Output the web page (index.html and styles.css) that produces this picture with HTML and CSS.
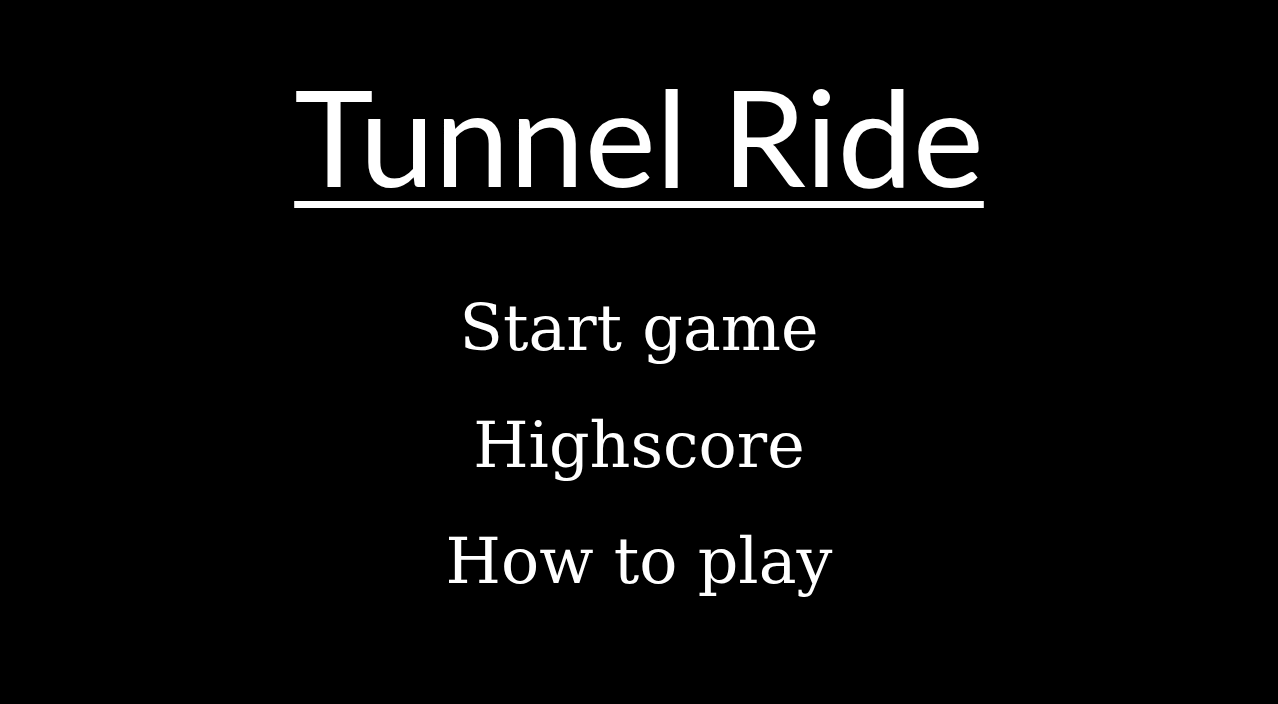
FILE: index.html
```html
<!DOCTYPE html>
<html>
<head>
<meta charset="utf-8">
<link rel="stylesheet" href="styles.css">
</head>
<body>
<main class="screen">
  <h1 class="title">Tunnel Ride</h1>
  <nav class="menu">
    <div class="item">Start game</div>
    <div class="item">Highscore</div>
    <div class="item">How to play</div>
  </nav>
</main>
</body>
</html>
```
FILE: styles.css
```css
html, body {
  margin: 0;
  padding: 0;
  background: #000;
  height: 100%;
}
.screen {
  display: flex;
  flex-direction: column;
  align-items: center;
  color: #fff;
  padding-top: 55px;
}
.title {
  margin: 0;
  font-family: Lato, sans-serif;
  font-weight: 400;
  font-size: 134.5px;
  line-height: 160px;
  text-decoration: underline;
  text-decoration-thickness: 7px;
  text-underline-offset: 14px;
}
.menu {
  display: flex;
  flex-direction: column;
  align-items: center;
  margin-top: 55px;
}
.item {
  font-family: "DejaVu Serif", serif;
  font-size: 63.5px;
  line-height: 116.5px;
}
```
